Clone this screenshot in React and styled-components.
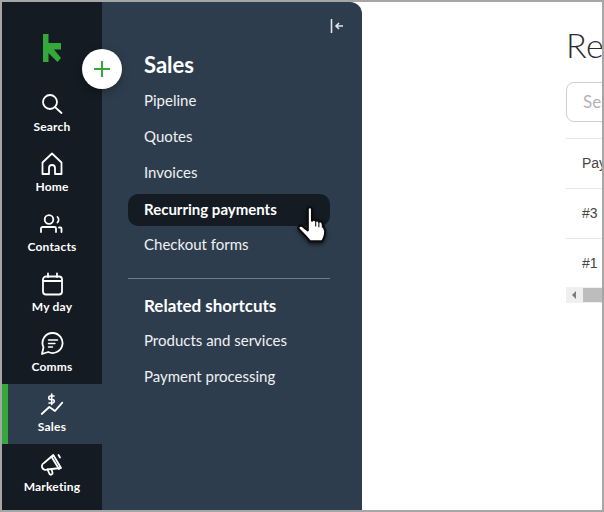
import React from 'react';
import styled, { createGlobalStyle } from 'styled-components';

const Global = createGlobalStyle`
  html, body { margin: 0; padding: 0; background: #fff; }
  body { font-family: "Lato", "Liberation Sans", sans-serif; }
`;

const Frame = styled.div`
  width: 604px; height: 512px; box-sizing: border-box;
  border: 2px solid #a6a6a6; display: flex; overflow: hidden; position: relative; background: #fff;
`;
const Rail = styled.nav`
  width: 100px; flex: none; background: #141b23; display: flex; flex-direction: column; padding-top: 82px; box-sizing: border-box;
`;
const Logo = styled.svg`
  position: absolute; left: 41px; top: 32px; width: 18px; height: 28px;
`;
const RailItem = styled.a`
  height: 60px; flex: none; box-sizing: border-box; display: flex; flex-direction: column; align-items: center;
  padding-top: 8px; color: #fff; font-size: 12px; letter-spacing: .2px; font-weight: 700; line-height: 14px; gap: 0;
  background: ${p => p.$active ? '#2e3d4d' : 'transparent'};
  border-left: ${p => p.$active ? '6px solid #35a83a' : '0'};
  padding-right: ${p => p.$active ? '6px' : '0'};
`;
const IconBox = styled.svg`
  width: 28px; height: 28px; fill: none; stroke: #fff; stroke-width: 1.8; stroke-linecap: round; stroke-linejoin: round;
`;
const Panel = styled.aside`
  width: 260px; flex: none; background: #2e3d4d; border-top-right-radius: 12px; box-sizing: border-box;
  padding: 50px 32px 0 26px; color: #fff; display: flex; flex-direction: column; position: relative;
`;
const Collapse = styled.svg`
  position: absolute; left: 228px; top: 16px; width: 15px; height: 16px; fill: none; stroke: #e2e5e8; stroke-width: 1.6;
`;
const Heading = styled.h2`
  margin: 0 0 ${p => p.$gap || 6}px 16px; font-size: ${p => p.$size || 22}px; line-height: 26px; font-weight: 700; color: #fff;
`;
const Link = styled.a`
  height: 36px; line-height: 32px; flex: none; box-sizing: border-box; padding-left: 16px; font-size: 15px; color: #f0f1f3;
  ${p => p.$active && `background: #141b23; height: 32px; margin: 2px 0; line-height: 30px; border-radius: 10px; font-weight: 700; color: #fff;`}
`;
const Rule = styled.hr`
  width: 100%; margin: 14px 0 14px; border: 0; border-top: 1px solid #737d87;
`;
const Plus = styled.div`
  position: absolute; left: 80px; top: 47px; width: 40px; height: 40px; border-radius: 50%; background: #fff;
  box-shadow: 0 3px 10px rgba(0,0,0,.3); display: flex; align-items: center; justify-content: center;
`;
const Cursor = styled.svg`
  position: absolute; left: 294px; top: 204px; width: 32px; height: 37px; filter: drop-shadow(0 2px 2px rgba(0,0,0,.6));
`;
const Main = styled.main`
  flex: 1; min-width: 0; padding: 23px 0 0 204px; overflow: hidden; color: #2b2b2b;
`;
const Title = styled.h1`
  margin: 0; font-size: 34px; line-height: 40px; font-weight: 300; white-space: nowrap; letter-spacing: .5px;
  font-family: "Lato", sans-serif;
`;
const Search = styled.div`
  margin-top: 17px; width: 100px; height: 40px; box-sizing: border-box; border: 1px solid #cfcfcf; border-radius: 8px;
  padding-left: 16px; line-height: 38px; font-size: 17px; color: #b4b4b4; white-space: nowrap;
`;
const Table = styled.div`
  margin-top: 16px; width: 100px; font-family: "Liberation Sans", sans-serif; font-size: 14px;
`;
const Row = styled.div`
  height: 50px; box-sizing: border-box; border-top: 1px solid #e6e6e6; padding-left: 16px; line-height: 49px; color: #444; white-space: nowrap;
`;
const ScrollBar = styled.div`
  height: 16px; margin-top: -1px; background: #efefef; display: flex; align-items: center;
`;
const Arrow = styled.span`
  width: 0; height: 0; margin-left: 6px; border: 4px solid transparent; border-right-color: #7d7d7d; border-left: 0;
`;
const Thumb = styled.span`
  margin-left: 7px; flex: 1; height: 14px; background: #bdbdbd;
`;

const items = [
  ['Search', <><circle cx="12" cy="10" r="7" /><path d="M17.500 15.500l6 5.500" /></>],
  ['Home', <path d="M14 1.500L4.500 10.500V22H11V16a3 3 0 016 0v6h6.500V10.500z" />],
  ['Contacts', <><circle cx="11" cy="7.500" r="4.300" /><path d="M3 20v-3.500a1.500 1.500 0 011.500-1.500h12a1.500 1.500 0 011.500 1.500V20M19.500 5a4 4 0 010 5.500M21 15.500h1.500a1 1 0 011 1V20" /></>],
  ['My day', <><rect x="5" y="4.500" width="19" height="18" rx="3" /><path d="M5 9h19M10 1.500V5M19 1.500V5" /></>],
  ['Comms', <><path d="M14.700 1a10 10 0 11-4.500 19L4 22l1.500-6.700A10 10 0 0114.700 1z" /><path d="M10.500 8h9M10.500 11.500h6.500M10.500 15h4" strokeWidth="1.400" /></>],
  ['Sales', <><path d="M3.700 22l7.600-7 5.700 4 7.300-8.300" /><path d="M16 4h-3.500a1.600 1.600 0 000 3.500h2a1.600 1.600 0 010 3.500H11M13.700 2v10.500" strokeWidth="1.600" /></>, true],
  ['Marketing', <><path d="M15.300 3L23 16 9 17.500a3.500 3.500 0 01-3-6.500z" /><path d="M9.500 17.500l2 4.500a1.700 1.700 0 003-1.500l-1-3.200M13.500 4.800L21 17M20.500 3l1.500 2.500" /></>],
];

export default function App() {
  return (
    <Frame>
      <Global />
      <Rail>
        <Logo viewBox="0 0 18 28"><path fill="#35a83a" d="M0 0h5.500v9H18v6.500h-7L18 24l-3.500 4-9-9v9H0z" /></Logo>
        {items.map(([label, icon, active]) => (
          <RailItem key={label} $active={active}>
            <IconBox viewBox="0 0 28 28">{icon}</IconBox>
            {label}
          </RailItem>
        ))}
      </Rail>
      <Panel>
        <Collapse viewBox="0 0 15 16"><path d="M1.500 1v14" /><path d="M13 8H6M9 5L6 8l3 3" /></Collapse>
        <Heading>Sales</Heading>
        <Link>Pipeline</Link>
        <Link>Quotes</Link>
        <Link>Invoices</Link>
        <Link $active>Recurring payments</Link>
        <Link>Checkout forms</Link>
        <Rule />
        <Heading $size={17} $gap={5}>Related shortcuts</Heading>
        <Link>Products and services</Link>
        <Link>Payment processing</Link>
      </Panel>
      <Main>
        <Title>Recurring payments</Title>
        <Search>Search payments</Search>
        <Table>
          <Row>Payment</Row>
          <Row>#3</Row>
          <Row>#1</Row>
          <ScrollBar><Arrow /><Thumb /></ScrollBar>
        </Table>
      </Main>
      <Plus>
        <svg width="16" height="16" viewBox="0 0 16 16" fill="none" stroke="#35a83a" strokeWidth="2"><path d="M8 0v16M0 8h16" /></svg>
      </Plus>
      <Cursor viewBox="0 0 30 35">
        <path fill="#fff" stroke="#0c0c0c" strokeWidth="2" strokeLinejoin="round" d="M11 3c0-2.500 4-2.500 4 0v11l.5-.5c1-.8 2.500-.5 3 .5 1-.8 2.500-.5 3 .8 1-.6 3-.3 3.300 1.200l2.700 7.500c0 4-1.500 8-3 10H13c-2-3-6-7-10-11-2-2 0-5 3-3.500l5 4z" />
        <path fill="none" stroke="#0c0c0c" strokeWidth="1" d="M18.500 14.500v5M21.500 15v5M24.800 16.500v4" />
      </Cursor>
    </Frame>
  );
}
